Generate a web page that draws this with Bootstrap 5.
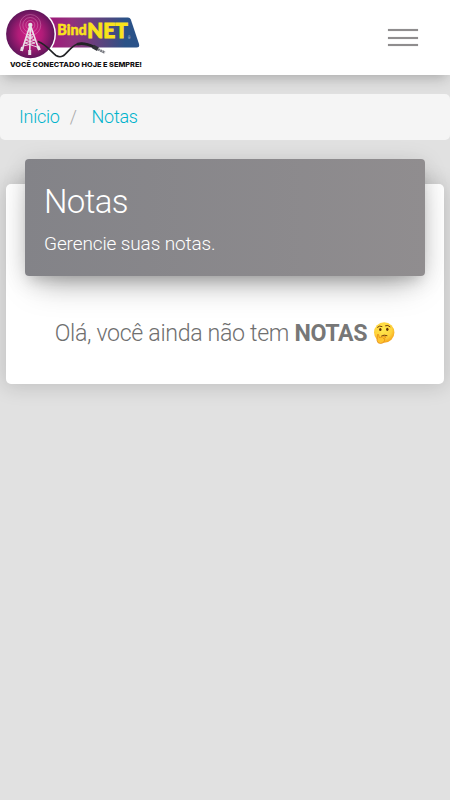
<!DOCTYPE html>
<html lang="pt-BR">
<head>
<meta charset="utf-8">
<meta name="viewport" content="width=device-width, initial-scale=1">
<title>Notas</title>
<link href="https://cdn.jsdelivr.net/npm/bootstrap@5.3.0/dist/css/bootstrap.min.css" rel="stylesheet">
<style>
body { background: #e1e1e1; font-family: Roboto, "Liberation Sans", sans-serif; font-weight: 300; min-height: 100vh; overflow-x: hidden; }
.top-bar { height: 75px; box-shadow: 0 4px 18px 0 rgba(0,0,0,.12), 0 7px 10px -5px rgba(0,0,0,.15); }
.brand-logo { width: 150px; height: 75px; }
.menu-toggle { width: 30px; height: 17px; margin-right: 32px; }
.menu-toggle span { height: 2px; background: #8f8d8e; box-shadow: 0 0 1px #aaa; }
.crumbs { height: 46px; margin-top: 19px; padding: 0 19px 1px; background: #f5f5f5; border-radius: 5px; font-size: 18px; letter-spacing: -.25px; --bs-breadcrumb-divider-color: #aaa; }
.crumbs a { color: #00b3cc; }
.crumbs .breadcrumb-item + .breadcrumb-item { padding-left: 10px; }
.crumbs .breadcrumb-item + .breadcrumb-item::before { padding-right: 15px; }
.notes-card { margin: 44px 6px 0; height: 200px; border-radius: 5px; box-shadow: 0 1px 20px 2px rgba(0,0,0,.15); }
.notes-header { height: 117px; margin: -25px 19px 0; padding: 24px 19px 0; border-radius: 4px; background: linear-gradient(90deg, #838388, #908d8f); box-shadow: 0 16px 34px -12px rgba(0,0,0,.34), 0 4px 25px 0 rgba(0,0,0,.12), 0 8px 12px -5px rgba(0,0,0,.13); }
.notes-title { font-size: 33px; line-height: 38px; font-weight: 300; letter-spacing: -.6px; margin-bottom: 9px; }
.notes-sub { font-size: 19px; line-height: 28px; letter-spacing: -.12px; }
.empty-msg { margin-top: 42px; font-size: 23.2px; letter-spacing: -.34px; line-height: 30px; color: #6f6f6f; white-space: nowrap; }
.empty-msg strong { font-weight: 700; color: #777; }
.emoji { width: 22px; height: 22px; margin-left: 6px; margin-top: 0; }
</style>
</head>
<body>
<nav class="top-bar bg-white d-flex align-items-center justify-content-between">
  <a href="#" class="d-block" aria-label="BindNET">
    <svg class="brand-logo d-block" viewBox="0 0 150 75">
      <defs>
        <linearGradient id="plate" x1="0" x2="1"><stop offset="0" stop-color="#9f1679"/><stop offset=".25" stop-color="#92317d"/><stop offset=".65" stop-color="#50477f"/><stop offset=".85" stop-color="#2a5287"/><stop offset="1" stop-color="#2b5289"/></linearGradient>
        <radialGradient id="disc"><stop offset="0" stop-color="#d91b87"/><stop offset=".5" stop-color="#b01c78"/><stop offset="1" stop-color="#60165b"/></radialGradient>
      </defs>
      <path d="M49 17.5H128Q130 17.5 130.800 19.500L139 44Q140 47.500 136.500 47.500H49Z" fill="url(#plate)"/>
      <circle cx="30.500" cy="34" r="25.500" fill="#fff"/>
      <circle cx="30.300" cy="34" r="24.200" fill="url(#disc)"/>
      <g fill="none" stroke="#e5a5cc" stroke-width=".5" opacity=".75"><circle cx="30.300" cy="25" r="4.500"/><circle cx="30.300" cy="25" r="7.500"/><circle cx="30.300" cy="25" r="10.500"/></g>
      <g stroke="#e9e3e8" fill="none"><circle cx="30.300" cy="25" r="2.200" fill="#e9e3e8" stroke="none"/>
        <path d="M29.500 27L22 50M31 27L39 50M30.300 27L29.700 55" stroke-width="1.600"/>
        <path d="M27.500 34L33 37L25.500 40L35 43L23.500 46M33 34L27 37L35 40L25 43L37 47M29 31H32" stroke-width=".9"/>
        <path d="M22.500 47L21.500 51M29.700 50V55M37.800 46L39.500 50" stroke-width="3"/></g>
      <path d="M38 41.500C46 44 51 52 56 55.500C65 61 68 47 77 44.200C83 42.500 88 44 93 46.500" fill="none" stroke="#222326" stroke-width="1.600"/>
      <path d="M77 44.200C83 42.500 88 44 94 47" fill="none" stroke="#222326" stroke-width="2.600"/>
      <path d="M93 46.500L98 49.300" stroke="#303238" stroke-width="4"/>
      <path d="M98 49.300L105 52.700" stroke="#777980" stroke-width="2.500" stroke-dasharray="2 .5"/>
      <g fill="#f9e31b" stroke="#f9e31b" font-family="Lato, sans-serif" font-weight="900">
        <text x="57.300" y="34.500" font-size="15.500" stroke-width=".5" textLength="29.500" lengthAdjust="spacingAndGlyphs">Bind</text>
        <text x="87.300" y="38.300" font-size="20.500" stroke-width=".9" textLength="40.500" lengthAdjust="spacingAndGlyphs">NET</text>
      </g>
      <text x="128" y="39" font-size="3" fill="#fff" font-family="Roboto, sans-serif">®</text>
      <text x="10" y="67" font-size="6.500" font-weight="800" fill="#111" font-family="Inter, sans-serif" textLength="132" lengthAdjust="spacingAndGlyphs">VOCÊ CONECTADO HOJE E SEMPRE!</text>
    </svg>
  </a>
  <button type="button" class="menu-toggle btn p-0 border-0 rounded-0 d-flex flex-column justify-content-between" aria-label="Menu">
    <span class="w-100"></span><span class="w-100"></span><span class="w-100"></span>
  </button>
</nav>
<nav aria-label="breadcrumb">
  <ol class="crumbs breadcrumb align-items-center mb-0">
    <li class="breadcrumb-item"><a href="#" class="text-decoration-none">Início</a></li>
    <li class="breadcrumb-item"><a href="#" class="text-decoration-none">Notas</a></li>
  </ol>
</nav>
<main class="card notes-card border-0">
  <div class="notes-header text-white">
    <h1 class="notes-title">Notas</h1>
    <p class="notes-sub mb-0">Gerencie suas notas.</p>
  </div>
  <div class="empty-msg d-flex justify-content-center align-items-center">
    <span>Olá, você ainda não tem <strong>NOTAS</strong></span>
    <svg class="emoji" viewBox="0 0 22 22" role="img" aria-label="Pensativo">
      <defs><radialGradient id="face" cx=".45" cy=".35" r=".65"><stop offset="0" stop-color="#ffe94f"/><stop offset=".65" stop-color="#ffd33c"/><stop offset="1" stop-color="#f5a31d"/></radialGradient></defs>
      <circle cx="11.200" cy="10.500" r="10.200" fill="url(#face)"/>
      <path d="M4.500 5.200Q6.500 3.200 9 4.500M12.500 3.700Q15 2.500 17 4.700" fill="none" stroke="#76400d" stroke-width="1" stroke-linecap="round"/>
      <ellipse cx="7.300" cy="7.500" rx="1.200" ry="1.600" fill="#633209"/><ellipse cx="14.300" cy="7.300" rx="1.200" ry="1.600" fill="#633209"/>
      <path d="M8.500 14Q11 12.300 14 13.600" fill="none" stroke="#76400d" stroke-width="1" stroke-linecap="round"/>
      <path d="M4.500 12.500Q5.800 11.800 6 14L6.300 15.600L12 14.400Q13.500 14.500 12.700 15.700L10.500 16.500Q12.500 17 11.500 18.500Q11 21.500 7.500 21.500Q4.300 21.500 4 18.500Z" fill="#ffc42e" stroke="#df8414" stroke-width=".7"/>
    </svg>
  </div>
</main>
<script src="https://cdn.jsdelivr.net/npm/bootstrap@5.3.0/dist/js/bootstrap.bundle.min.js"></script>
</body>
</html>
